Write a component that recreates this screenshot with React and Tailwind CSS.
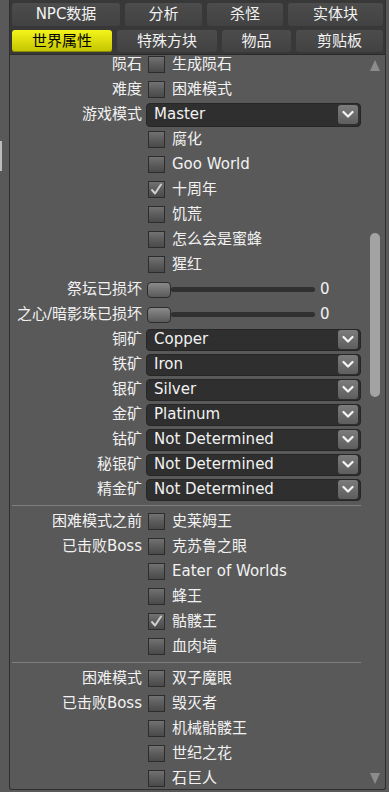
import React from 'react';

const FONT = "font-['DejaVu_Sans','Noto_Sans_CJK_SC',sans-serif]";

const tabsTop = [
  { name: 'NPC数据', w: 'w-[108px]' },
  { name: '分析', w: 'w-[77px]' },
  { name: '杀怪', w: 'w-[76px]' },
  { name: '实体块', w: 'w-[95px]' },
];
const tabsBottom = [
  { name: '世界属性', w: 'w-[100px]', active: true },
  { name: '特殊方块', w: 'w-[100px]' },
  { name: '物品', w: 'w-[69px]' },
  { name: '剪贴板', w: 'w-[87px]' },
];

const worldRows = [
  { label: '陨石', kind: 'check', text: '生成陨石' },
  { label: '难度', kind: 'check', text: '困难模式' },
  { label: '游戏模式', kind: 'select', value: 'Master', tall: true },
  { kind: 'check', text: '腐化' },
  { kind: 'check', text: 'Goo World' },
  { kind: 'check', text: '十周年', checked: true },
  { kind: 'check', text: '饥荒' },
  { kind: 'check', text: '怎么会是蜜蜂' },
  { kind: 'check', text: '猩红' },
  { label: '祭坛已损坏', kind: 'slider' },
  { label: '之心/暗影珠已损坏', kind: 'slider' },
  { label: '铜矿', kind: 'select', value: 'Copper' },
  { label: '铁矿', kind: 'select', value: 'Iron' },
  { label: '银矿', kind: 'select', value: 'Silver' },
  { label: '金矿', kind: 'select', value: 'Platinum' },
  { label: '钴矿', kind: 'select', value: 'Not Determined' },
  { label: '秘银矿', kind: 'select', value: 'Not Determined' },
  { label: '精金矿', kind: 'select', value: 'Not Determined' },
];

const preHardmode = [
  { label: '困难模式之前', kind: 'check', text: '史莱姆王' },
  { label: '已击败Boss', kind: 'check', text: '克苏鲁之眼' },
  { kind: 'check', text: 'Eater of Worlds' },
  { kind: 'check', text: '蜂王' },
  { kind: 'check', text: '骷髅王', checked: true },
  { kind: 'check', text: '血肉墙' },
];

const hardmode = [
  { label: '困难模式', kind: 'check', text: '双子魔眼' },
  { label: '已击败Boss', kind: 'check', text: '毁灭者' },
  { kind: 'check', text: '机械骷髅王' },
  { kind: 'check', text: '世纪之花' },
  { kind: 'check', text: '石巨人' },
];

function Tab({ name, w, active }) {
  return (
    <div
      className={
        'flex items-center justify-center rounded-[3px] ' +
        w +
        (active
          ? ' bg-linear-to-b from-[#f4f41a] to-[#c4c400] text-black shadow-[inset_0_-1px_0_#8a8a00]'
          : ' bg-linear-to-b from-[#4c4c4c] to-[#424242] text-[#f2f2f2]')
      }
    >
      {name}
    </div>
  );
}

function Checkbox({ checked }) {
  return (
    <div className="w-[17px] h-[17px] shrink-0 border border-[#2c2c2c] bg-linear-to-b from-[#727272] via-[#5c5c5c] to-[#4a4a4a] flex items-center justify-center">
      {checked && (
        <svg width="13" height="13" viewBox="0 0 13 13">
          <path d="M2 7 L5 10.5 L11 1.5" fill="none" stroke="#cfcfcf" strokeWidth="2" strokeLinecap="round" strokeLinejoin="round" />
        </svg>
      )}
    </div>
  );
}

function Select({ value, tall }) {
  return (
    <div className={'ml-[4px] w-[215px] rounded-[4px] bg-[#2f2f2f] border border-[#262626] flex items-center justify-between pl-[7px] pr-[2px] ' + (tall ? 'h-[24px]' : 'h-[22px]')}>
      <span className="text-[#f2f2f2] whitespace-nowrap">{value}</span>
      <div className="w-[20px] h-[19px] rounded-[3px] bg-linear-to-b from-[#7c7c7c] to-[#5e5e5e] flex items-center justify-center">
        <svg width="12" height="9" viewBox="0 0 12 9">
          <path d="M1.5 2 L6 6.5 L10.5 2" fill="none" stroke="#f4f4f4" strokeWidth="2.2" strokeLinecap="round" strokeLinejoin="round" />
        </svg>
      </div>
    </div>
  );
}

function Slider() {
  return (
    <div className="ml-[5px] flex items-center">
      <div className="w-[24px] h-[16px] rounded-[4px] border border-[#2c2c2c] bg-linear-to-b from-[#8a8a8a] to-[#5a5a5a]" />
      <div className="w-[144px] h-[5px] rounded-full bg-[#303030]" />
      <span className="ml-[5px] text-[#f2f2f2]">0</span>
    </div>
  );
}

function Row({ label, kind, text, checked, value, tall }) {
  return (
    <div className="flex items-center h-[25px] shrink-0">
      <div className="w-[132px] shrink-0 text-right whitespace-nowrap text-[#f2f2f2]">{label || ''}</div>
      {kind === 'check' && (
        <div className="ml-[6px] flex items-center">
          <Checkbox checked={checked} />
          <span className="ml-[7px] text-[#f2f2f2] whitespace-nowrap">{text}</span>
        </div>
      )}
      {kind === 'select' && <Select value={value} tall={tall} />}
      {kind === 'slider' && <Slider />}
    </div>
  );
}

function Separator() {
  return (
    <div className="h-[7px] shrink-0 flex items-center pl-[2px]">
      <div className="w-[349px] h-px bg-[#7e7e7e]" />
    </div>
  );
}

export default function App() {
  return (
    <div className={'w-[389px] h-[792px] bg-[#595959] flex text-[15px] leading-none overflow-hidden ' + FONT}>
      {/* left edge */}
      <div className="w-[9px] shrink-0 pt-[141px]">
        <div className="w-[2px] h-[30px] bg-[#bdbdbd]" />
      </div>

      {/* main panel */}
      <div className="w-[377px] h-[790px] shrink-0 flex flex-col border-x border-b border-[#2f2f2f] rounded-b-[3px]">
        <div className="bg-[#383838] px-[2px] pt-[3px] pb-[2px] flex flex-col gap-[4px] border-b border-[#2b2b2b]">
          <div className="flex gap-[5px] h-[23px]">
            {tabsTop.map((t) => (
              <Tab key={t.name} {...t} />
            ))}
          </div>
          <div className="flex gap-[5px] h-[22px]">
            {tabsBottom.map((t) => (
              <Tab key={t.name} {...t} />
            ))}
          </div>
        </div>

        <div className="flex flex-1 min-h-0">
          <div className="flex-1 overflow-hidden">
            <div className="flex flex-col -mt-[3px]">
              {worldRows.map((r, i) => (
                <Row key={'w' + i} {...r} />
              ))}
              <Separator />
              {preHardmode.map((r, i) => (
                <Row key={'p' + i} {...r} />
              ))}
              <Separator />
              {hardmode.map((r, i) => (
                <Row key={'h' + i} {...r} />
              ))}
            </div>
          </div>

          {/* scrollbar */}
          <div className="w-[19px] shrink-0 flex flex-col items-start pl-[4px] pt-[5px] pb-[5px]">
            <svg width="10" height="11" viewBox="0 0 10 11">
              <path d="M5 0 L10 11 L0 11 Z" fill="#8c8c8c" />
            </svg>
            <div className="mt-[162px] w-[10px] h-[164px] rounded-[5px] bg-[#a3a3a3]" />
            <div className="flex-1" />
            <svg width="10" height="11" viewBox="0 0 10 11">
              <path d="M0 0 L10 0 L5 11 Z" fill="#8c8c8c" />
            </svg>
          </div>
        </div>
      </div>

      <div className="flex-1" />
    </div>
  );
}
